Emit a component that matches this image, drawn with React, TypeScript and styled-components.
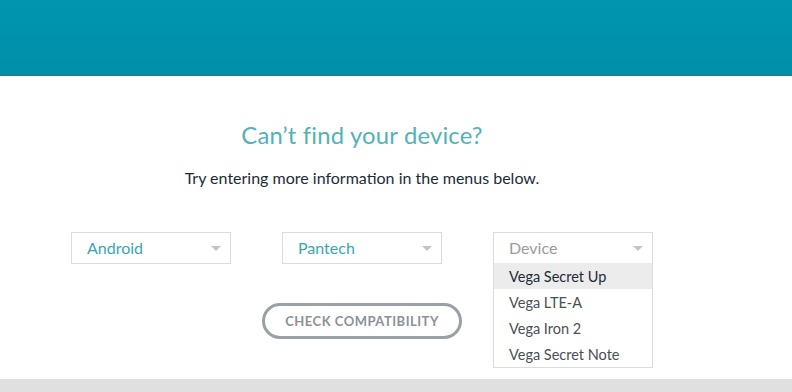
import React from "react";
import styled, { createGlobalStyle } from "styled-components";

const Global = createGlobalStyle`
  html, body { margin: 0; padding: 0; background: #ffffff; }
  body { font-family: Lato, "Open Sans", Arial, sans-serif; }
  * { box-sizing: border-box; }
`;

const Page = styled.div`
  width: 792px;
  height: 392px;
  display: flex;
  flex-direction: column;
  overflow: hidden;
`;

const Header = styled.header`
  height: 76px;
  flex: none;
  background: linear-gradient(#0096b0, #008fa9);
  border-bottom: 2px solid #1f7f8a;
`;

const Main = styled.main`
  flex: 1;
  padding: 0 0 0 71px;
`;

const Column = styled.div`
  width: 582px;
  display: flex;
  flex-direction: column;
  align-items: center;
`;

const Title = styled.h2`
  margin: 45px 0 0;
  font-size: 23.8px;
  font-weight: 400;
  line-height: 28px;
  color: #52b2b8;
  letter-spacing: 0.2px;
`;

const Subtitle = styled.p`
  margin: 19px 0 0;
  font-size: 16px;
  line-height: 20px;
  color: #1c2b36;
`;

const Selects = styled.div`
  margin-top: 44px;
  width: 100%;
  display: flex;
  gap: 51px;
  align-items: flex-start;
`;

const SelectWrap = styled.div`
  width: 160px;
  position: relative;
`;

const SelectBox = styled.div<{ $placeholder?: boolean }>`
  height: 32px;
  border: 1px solid #dcdcdc;
  background: #fff;
  display: flex;
  align-items: center;
  justify-content: space-between;
  padding: 0 9px 2px 15px;
  font-size: 16px;
  color: ${(p) => (p.$placeholder ? "#9a9a9a" : "#38a6b5")};
`;

const Arrow = styled.span`
  width: 0;
  height: 0;
  margin-top: 2px;
  border-left: 5px solid transparent;
  border-right: 5px solid transparent;
  border-top: 5px solid #c4c4c4;
`;

const Menu = styled.ul`
  position: absolute;
  top: 31px;
  left: 0;
  width: 160px;
  margin: 0;
  padding: 0;
  list-style: none;
  background: #fff;
  border: 1px solid #dcdcdc;
  border-top: none;
`;

const Option = styled.li<{ $active?: boolean }>`
  height: 26px;
  display: flex;
  align-items: center;
  padding-left: 15px;
  font-size: 14.5px;
  color: ${(p) => (p.$active ? "#1c2b36" : "#4a4f54")};
  background: ${(p) => (p.$active ? "#ececec" : "transparent")};
`;

const Button = styled.button`
  margin-top: 39px;
  width: 200px;
  height: 36px;
  border: 3px solid #9aa1a5;
  border-radius: 18px;
  background: #fff;
  font-family: inherit;
  font-size: 13px;
  font-weight: 700;
  letter-spacing: 0.5px;
  color: #8b9196;
`;

const Footer = styled.footer`
  height: 13px;
  flex: none;
  background: #e0e0e0;
`;

const options = ["Vega Secret Up", "Vega LTE-A", "Vega Iron 2", "Vega Secret Note"];

export default function App() {
  return (
    <>
      <Global />
      <Page>
        <Header />
        <Main>
          <Column>
            <Title>Can’t find your device?</Title>
            <Subtitle>Try entering more information in the menus below.</Subtitle>
            <Selects>
              <SelectWrap>
                <SelectBox>
                  Android
                  <Arrow />
                </SelectBox>
              </SelectWrap>
              <SelectWrap>
                <SelectBox>
                  Pantech
                  <Arrow />
                </SelectBox>
              </SelectWrap>
              <SelectWrap>
                <SelectBox $placeholder>
                  Device
                  <Arrow />
                </SelectBox>
                <Menu>
                  {options.map((o, i) => (
                    <Option key={o} $active={i === 0}>
                      {o}
                    </Option>
                  ))}
                </Menu>
              </SelectWrap>
            </Selects>
            <Button>CHECK COMPATIBILITY</Button>
          </Column>
        </Main>
        <Footer />
      </Page>
    </>
  );
}
